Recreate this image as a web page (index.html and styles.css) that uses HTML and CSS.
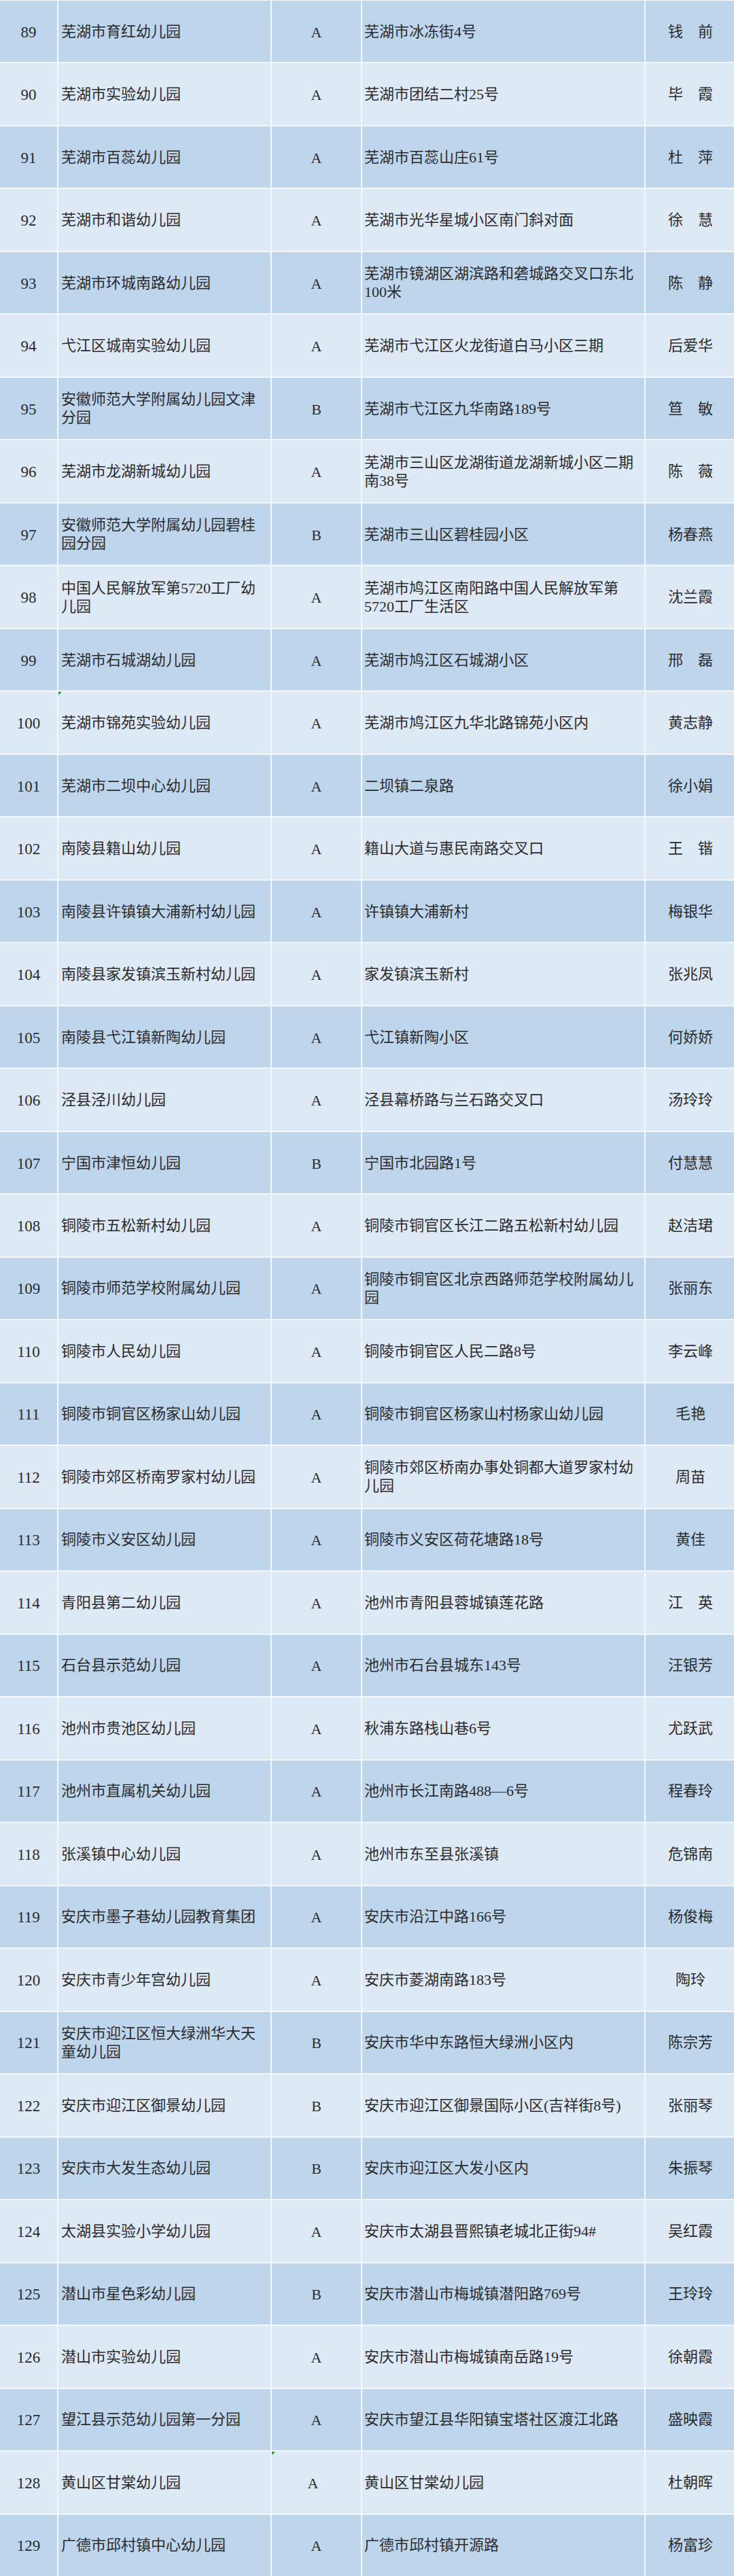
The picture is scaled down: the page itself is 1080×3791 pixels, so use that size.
FILE: index.html
```html
<!DOCTYPE html>
<html lang="zh-CN">
<head>
<meta charset="utf-8">
<title>幼儿园名单</title>
<link rel="stylesheet" href="styles.css">
</head>
<body>
<div class="table">
  <div class="row odd"><div class="c num">89</div><div class="c name">芜湖市育红幼儿园</div><div class="c lvl">A</div><div class="c addr">芜湖市冰冻街4号</div><div class="c who">钱　前</div></div>
  <div class="row even"><div class="c num">90</div><div class="c name">芜湖市实验幼儿园</div><div class="c lvl">A</div><div class="c addr">芜湖市团结二村25号</div><div class="c who">毕　霞</div></div>
  <div class="row odd"><div class="c num">91</div><div class="c name">芜湖市百蕊幼儿园</div><div class="c lvl">A</div><div class="c addr">芜湖市百蕊山庄61号</div><div class="c who">杜　萍</div></div>
  <div class="row even"><div class="c num">92</div><div class="c name">芜湖市和谐幼儿园</div><div class="c lvl">A</div><div class="c addr">芜湖市光华星城小区南门斜对面</div><div class="c who">徐　慧</div></div>
  <div class="row odd"><div class="c num">93</div><div class="c name">芜湖市环城南路幼儿园</div><div class="c lvl">A</div><div class="c addr">芜湖市镜湖区湖滨路和砻城路交叉口东北100米</div><div class="c who">陈　静</div></div>
  <div class="row even"><div class="c num">94</div><div class="c name">弋江区城南实验幼儿园</div><div class="c lvl">A</div><div class="c addr">芜湖市弋江区火龙街道白马小区三期</div><div class="c who">后爱华</div></div>
  <div class="row odd"><div class="c num">95</div><div class="c name">安徽师范大学附属幼儿园文津分园</div><div class="c lvl">B</div><div class="c addr">芜湖市弋江区九华南路189号</div><div class="c who">笪　敏</div></div>
  <div class="row even"><div class="c num">96</div><div class="c name">芜湖市龙湖新城幼儿园</div><div class="c lvl">A</div><div class="c addr">芜湖市三山区龙湖街道龙湖新城小区二期南38号</div><div class="c who">陈　薇</div></div>
  <div class="row odd"><div class="c num">97</div><div class="c name">安徽师范大学附属幼儿园碧桂园分园</div><div class="c lvl">B</div><div class="c addr">芜湖市三山区碧桂园小区</div><div class="c who">杨春燕</div></div>
  <div class="row even"><div class="c num">98</div><div class="c name">中国人民解放军第5720工厂幼儿园</div><div class="c lvl">A</div><div class="c addr">芜湖市鸠江区南阳路中国人民解放军第5720工厂生活区</div><div class="c who">沈兰霞</div></div>
  <div class="row odd"><div class="c num">99</div><div class="c name">芜湖市石城湖幼儿园</div><div class="c lvl">A</div><div class="c addr">芜湖市鸠江区石城湖小区</div><div class="c who">邢　磊</div></div>
  <div class="row even"><div class="c num">100</div><div class="c name flag">芜湖市锦苑实验幼儿园</div><div class="c lvl">A</div><div class="c addr">芜湖市鸠江区九华北路锦苑小区内</div><div class="c who">黄志静</div></div>
  <div class="row odd"><div class="c num">101</div><div class="c name">芜湖市二坝中心幼儿园</div><div class="c lvl">A</div><div class="c addr">二坝镇二泉路</div><div class="c who">徐小娟</div></div>
  <div class="row even"><div class="c num">102</div><div class="c name">南陵县籍山幼儿园</div><div class="c lvl">A</div><div class="c addr">籍山大道与惠民南路交叉口</div><div class="c who">王　锴</div></div>
  <div class="row odd"><div class="c num">103</div><div class="c name">南陵县许镇镇大浦新村幼儿园</div><div class="c lvl">A</div><div class="c addr">许镇镇大浦新村</div><div class="c who">梅银华</div></div>
  <div class="row even"><div class="c num">104</div><div class="c name">南陵县家发镇滨玉新村幼儿园</div><div class="c lvl">A</div><div class="c addr">家发镇滨玉新村</div><div class="c who">张兆凤</div></div>
  <div class="row odd"><div class="c num">105</div><div class="c name">南陵县弋江镇新陶幼儿园</div><div class="c lvl">A</div><div class="c addr">弋江镇新陶小区</div><div class="c who">何娇娇</div></div>
  <div class="row even"><div class="c num">106</div><div class="c name">泾县泾川幼儿园</div><div class="c lvl">A</div><div class="c addr">泾县幕桥路与兰石路交叉口</div><div class="c who">汤玲玲</div></div>
  <div class="row odd"><div class="c num">107</div><div class="c name">宁国市津恒幼儿园</div><div class="c lvl">B</div><div class="c addr">宁国市北园路1号</div><div class="c who">付慧慧</div></div>
  <div class="row even"><div class="c num">108</div><div class="c name">铜陵市五松新村幼儿园</div><div class="c lvl">A</div><div class="c addr">铜陵市铜官区长江二路五松新村幼儿园</div><div class="c who">赵洁珺</div></div>
  <div class="row odd"><div class="c num">109</div><div class="c name">铜陵市师范学校附属幼儿园</div><div class="c lvl">A</div><div class="c addr">铜陵市铜官区北京西路师范学校附属幼儿园</div><div class="c who">张丽东</div></div>
  <div class="row even"><div class="c num">110</div><div class="c name">铜陵市人民幼儿园</div><div class="c lvl">A</div><div class="c addr">铜陵市铜官区人民二路8号</div><div class="c who">李云峰</div></div>
  <div class="row odd"><div class="c num">111</div><div class="c name">铜陵市铜官区杨家山幼儿园</div><div class="c lvl">A</div><div class="c addr">铜陵市铜官区杨家山村杨家山幼儿园</div><div class="c who">毛艳</div></div>
  <div class="row even"><div class="c num">112</div><div class="c name">铜陵市郊区桥南罗家村幼儿园</div><div class="c lvl">A</div><div class="c addr">铜陵市郊区桥南办事处铜都大道罗家村幼儿园</div><div class="c who">周苗</div></div>
  <div class="row odd"><div class="c num">113</div><div class="c name">铜陵市义安区幼儿园</div><div class="c lvl">A</div><div class="c addr">铜陵市义安区荷花塘路18号</div><div class="c who">黄佳</div></div>
  <div class="row even"><div class="c num">114</div><div class="c name">青阳县第二幼儿园</div><div class="c lvl">A</div><div class="c addr">池州市青阳县蓉城镇莲花路</div><div class="c who">江　英</div></div>
  <div class="row odd"><div class="c num">115</div><div class="c name">石台县示范幼儿园</div><div class="c lvl">A</div><div class="c addr">池州市石台县城东143号</div><div class="c who">汪银芳</div></div>
  <div class="row even"><div class="c num">116</div><div class="c name">池州市贵池区幼儿园</div><div class="c lvl">A</div><div class="c addr">秋浦东路栈山巷6号</div><div class="c who">尤跃武</div></div>
  <div class="row odd"><div class="c num">117</div><div class="c name">池州市直属机关幼儿园</div><div class="c lvl">A</div><div class="c addr">池州市长江南路488—6号</div><div class="c who">程春玲</div></div>
  <div class="row even"><div class="c num">118</div><div class="c name">张溪镇中心幼儿园</div><div class="c lvl">A</div><div class="c addr">池州市东至县张溪镇</div><div class="c who">危锦南</div></div>
  <div class="row odd"><div class="c num">119</div><div class="c name">安庆市墨子巷幼儿园教育集团</div><div class="c lvl">A</div><div class="c addr">安庆市沿江中路166号</div><div class="c who">杨俊梅</div></div>
  <div class="row even"><div class="c num">120</div><div class="c name">安庆市青少年宫幼儿园</div><div class="c lvl">A</div><div class="c addr">安庆市菱湖南路183号</div><div class="c who">陶玲</div></div>
  <div class="row odd"><div class="c num">121</div><div class="c name">安庆市迎江区恒大绿洲华大天童幼儿园</div><div class="c lvl">B</div><div class="c addr">安庆市华中东路恒大绿洲小区内</div><div class="c who">陈宗芳</div></div>
  <div class="row even"><div class="c num">122</div><div class="c name">安庆市迎江区御景幼儿园</div><div class="c lvl">B</div><div class="c addr">安庆市迎江区御景国际小区(吉祥街8号)</div><div class="c who">张丽琴</div></div>
  <div class="row odd"><div class="c num">123</div><div class="c name">安庆市大发生态幼儿园</div><div class="c lvl">B</div><div class="c addr">安庆市迎江区大发小区内</div><div class="c who">朱振琴</div></div>
  <div class="row even"><div class="c num">124</div><div class="c name">太湖县实验小学幼儿园</div><div class="c lvl">A</div><div class="c addr">安庆市太湖县晋熙镇老城北正街94#</div><div class="c who">吴红霞</div></div>
  <div class="row odd"><div class="c num">125</div><div class="c name">潜山市星色彩幼儿园</div><div class="c lvl">B</div><div class="c addr">安庆市潜山市梅城镇潜阳路769号</div><div class="c who">王玲玲</div></div>
  <div class="row even"><div class="c num">126</div><div class="c name">潜山市实验幼儿园</div><div class="c lvl">A</div><div class="c addr">安庆市潜山市梅城镇南岳路19号</div><div class="c who">徐朝霞</div></div>
  <div class="row odd"><div class="c num">127</div><div class="c name">望江县示范幼儿园第一分园</div><div class="c lvl">A</div><div class="c addr">安庆市望江县华阳镇宝塔社区渡江北路</div><div class="c who">盛映霞</div></div>
  <div class="row even"><div class="c num">128</div><div class="c name">黄山区甘棠幼儿园</div><div class="c lvl flag shift">A</div><div class="c addr">黄山区甘棠幼儿园</div><div class="c who">杜朝晖</div></div>
  <div class="row odd"><div class="c num">129</div><div class="c name">广德市邱村镇中心幼儿园</div><div class="c lvl">A</div><div class="c addr">广德市邱村镇开源路</div><div class="c who">杨富珍</div></div>
</div>
</body>
</html>
```

FILE: styles.css
```css
html, body {
  margin: 0;
  padding: 0;
  background: #f4f8fc;
}

.table {
  box-sizing: border-box;
  width: 1080px;
  height: 3791px;
  padding-top: 1px;
  display: grid;
  grid-template-columns: 84px 312px 131px 415px 1fr;
  grid-template-rows: repeat(41, 1fr);
  column-gap: 2px;
  row-gap: 2px;
  font-family: "Liberation Serif", "Noto Sans CJK SC", serif;
  font-size: 22px;
  line-height: 27px;
  color: #2b2b2b;
}

.row {
  display: contents;
}

.c {
  position: relative;
  display: flex;
  align-items: center;
  box-sizing: border-box;
  min-width: 0;
}

.odd > .c {
  background: #bdd6ec;
}

.even > .c {
  background: #dde9f5;
}

.num {
  justify-content: center;
  font-size: 23px;
  padding-top: 2px;
}

.name {
  padding: 0 6px 0 4px;
}

.lvl {
  justify-content: center;
  font-size: 22px;
  padding-top: 2px;
}

.addr {
  padding: 0 5px 0 3px;
}

.who {
  justify-content: center;
  padding-left: 2px;
}

.shift {
  padding-right: 10px;
}

.flag::before {
  content: "";
  position: absolute;
  left: 0;
  top: 0;
  width: 0;
  height: 0;
  border-top: 5px solid #3a8a3a;
  border-right: 5px solid transparent;
}
```
